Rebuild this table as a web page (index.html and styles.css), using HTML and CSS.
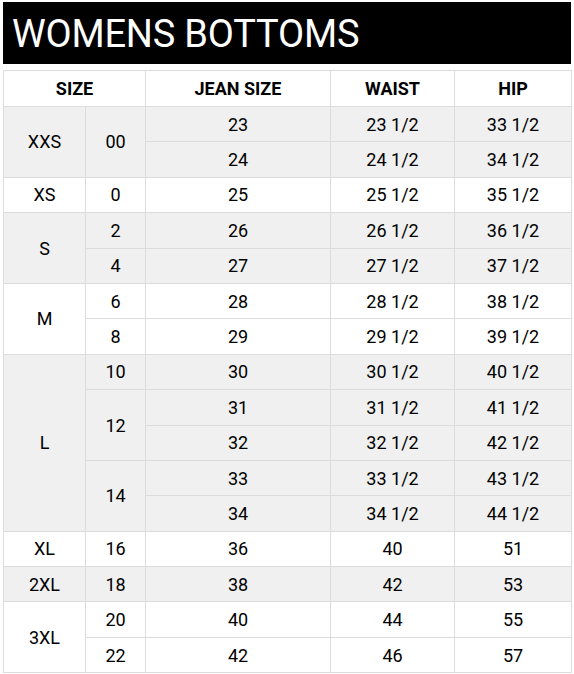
FILE: index.html
```html
<!DOCTYPE html>
<html>
<head>
<meta charset="utf-8">
<link rel="stylesheet" href="styles.css">
</head>
<body>
<div class="chart">
  <h1 class="title">WOMENS BOTTOMS</h1>
  <table class="sizes">
    <colgroup>
      <col class="c-size"><col class="c-num"><col class="c-jean"><col class="c-waist"><col class="c-hip">
    </colgroup>
    <thead>
      <tr><th colspan="2">SIZE</th><th>JEAN SIZE</th><th>WAIST</th><th>HIP</th></tr>
    </thead>
    <tbody class="shade">
      <tr><td rowspan="2">XXS</td><td rowspan="2">00</td><td>23</td><td>23 1/2</td><td>33 1/2</td></tr>
      <tr><td>24</td><td>24 1/2</td><td>34 1/2</td></tr>
    </tbody>
    <tbody>
      <tr><td>XS</td><td>0</td><td>25</td><td>25 1/2</td><td>35 1/2</td></tr>
    </tbody>
    <tbody class="shade">
      <tr><td rowspan="2">S</td><td>2</td><td>26</td><td>26 1/2</td><td>36 1/2</td></tr>
      <tr><td>4</td><td>27</td><td>27 1/2</td><td>37 1/2</td></tr>
    </tbody>
    <tbody>
      <tr><td rowspan="2">M</td><td>6</td><td>28</td><td>28 1/2</td><td>38 1/2</td></tr>
      <tr><td>8</td><td>29</td><td>29 1/2</td><td>39 1/2</td></tr>
    </tbody>
    <tbody class="shade">
      <tr><td rowspan="5">L</td><td>10</td><td>30</td><td>30 1/2</td><td>40 1/2</td></tr>
      <tr><td rowspan="2">12</td><td>31</td><td>31 1/2</td><td>41 1/2</td></tr>
      <tr><td>32</td><td>32 1/2</td><td>42 1/2</td></tr>
      <tr><td rowspan="2">14</td><td>33</td><td>33 1/2</td><td>43 1/2</td></tr>
      <tr><td>34</td><td>34 1/2</td><td>44 1/2</td></tr>
    </tbody>
    <tbody>
      <tr><td>XL</td><td>16</td><td>36</td><td>40</td><td>51</td></tr>
    </tbody>
    <tbody class="shade">
      <tr><td>2XL</td><td>18</td><td>38</td><td>42</td><td>53</td></tr>
    </tbody>
    <tbody>
      <tr><td rowspan="2">3XL</td><td>20</td><td>40</td><td>44</td><td>55</td></tr>
      <tr><td>22</td><td>42</td><td>46</td><td>57</td></tr>
    </tbody>
  </table>
</div>
</body>
</html>
```

FILE: styles.css
```css
html, body {
  margin: 0;
  padding: 0;
  background: #ffffff;
}
.chart {
  padding: 2px 3px 0 3px;
  width: 568px;
  font-family: Roboto, "Liberation Sans", Arial, sans-serif;
  color: #000000;
}
.title {
  margin: 0;
  height: 62px;
  background: #000000;
  color: #ffffff;
  font-weight: 400;
  font-size: 38px;
  line-height: 64px;
  padding-left: 9px;
  letter-spacing: -0.2px;
}
.sizes {
  margin-top: 6px;
  width: 568px;
  border-collapse: collapse;
  table-layout: fixed;
}
.c-size { width: 82px; }
.c-num { width: 60px; }
.c-jean { width: 185px; }
.c-waist { width: 124px; }
.c-hip { width: 117px; }
.sizes th, .sizes td {
  border: 1px solid #dcdcdc;
  text-align: center;
  vertical-align: middle;
  padding: 0;
}
.sizes th {
  height: 35px;
  font-weight: 700;
  font-size: 18px;
  color: #000000;
}
.sizes td {
  height: 34.4px;
  font-size: 18px;
}
.shade td {
  background: #f0f0f0;
}
```
